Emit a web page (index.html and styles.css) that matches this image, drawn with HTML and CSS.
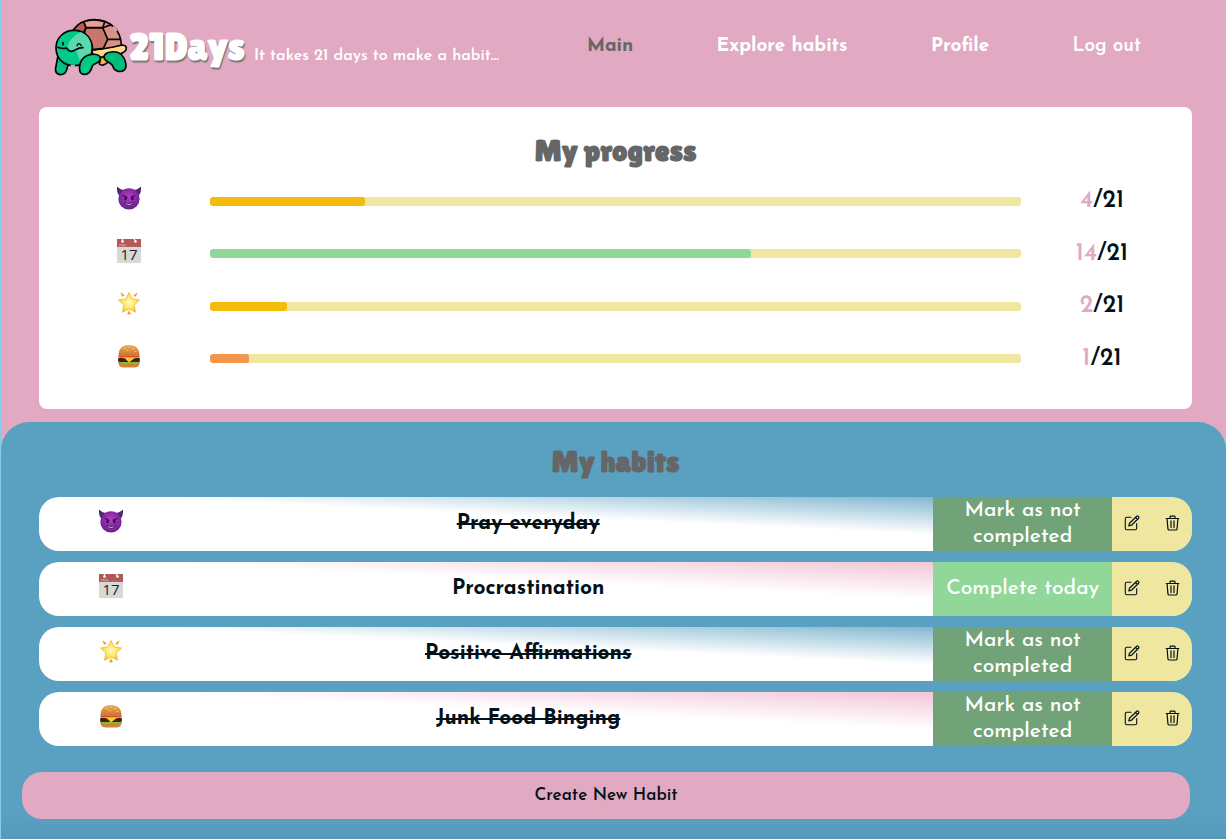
FILE: index.html
```html
<!DOCTYPE html>
<html lang="en">
<head>
<meta charset="utf-8">
<meta name="viewport" content="width=device-width, initial-scale=1">
<title>21Days</title>
<link rel="stylesheet" href="styles.css">
</head>
<body>
<svg class="sprite" aria-hidden="true">
  <defs>
    <radialGradient id="g-devil" cx=".5" cy=".4" r=".6"><stop offset="0" stop-color="#b040c4"/><stop offset=".6" stop-color="#8c28a8"/><stop offset="1" stop-color="#5e2488"/></radialGradient>
    <radialGradient id="g-star" cx=".5" cy=".5" r=".55"><stop offset="0" stop-color="#fffbc0"/><stop offset=".6" stop-color="#ffe45e"/><stop offset="1" stop-color="#f6b535"/></radialGradient>
    <linearGradient id="g-bun" x1="0" y1="0" x2="0" y2="1"><stop offset="0" stop-color="#f0ac55"/><stop offset="1" stop-color="#c9752a"/></linearGradient>
  </defs>
  <symbol id="devil" viewBox="0 0 24 24">
    <path d="M0 .5C-.3 5 .5 8 3 10.500L8 4C5 4 2.500 3 0 .5ZM24 .5C24.300 5 23.500 8 21 10.500L16 4C19 4 21.500 3 24 .5Z" fill="#55246f"/>
    <circle cx="12" cy="12.900" r="10.600" fill="url(#g-devil)"/>
    <path d="M6 9.500 10 11.300M18 9.500 14 11.300" stroke="#3b1055" stroke-width="1.200" stroke-linecap="round"/>
    <ellipse cx="8.600" cy="12.600" rx="1.200" ry="1.900" fill="#2c0b42"/><ellipse cx="15.400" cy="12.600" rx="1.200" ry="1.900" fill="#2c0b42"/>
    <path d="M7 16.500Q12 22 17 16.500Q12 18.700 7 16.500Z" fill="#f4e6fa" stroke="#3b1055" stroke-width=".8"/>
  </symbol>
  <symbol id="star" viewBox="0 0 24 24">
    <path d="M12 1.500 15.200 7.900 22.500 9 17.200 14.100 18.500 21.200 12 17.900 5.500 21.200 6.800 14.100 1.500 9 8.800 7.900Z" fill="url(#g-star)" stroke="#efb43b" stroke-width=".8" stroke-linejoin="round"/>
    <path d="M3.500 1.200 7.600 4.200 6 6Q3.800 4.500 3.500 1.200ZM20.500 1.200 16.400 4.200 18 6Q20.200 4.500 20.500 1.200ZM12 19.200 14 23Q12 24 10 23Z" fill="#eda42e"/>
  </symbol>
  <symbol id="burger" viewBox="0 0 24 24">
    <path d="M1.500 17.500H22.500V19.500Q22 23.500 17 23.500H7Q2 23.500 1.500 19.500Z" fill="#d18534"/>
    <path d="M1 17Q3 16 6 17T12 17T18 17T23 17V18.500Q20 21 17 19.500T11 19.500T5 19.500T1 18.500Z" fill="#83bd3b"/>
    <rect x="1" y="13.500" width="22" height="4.500" rx="2" fill="#43200f"/>
    <path d="M2 13H22L17 14.500 12 18.500 8 14.500Z" fill="#ffc928"/>
    <path d="M1.500 11.300H22.500V13.300H1.500Z" fill="#d84b31"/>
    <path d="M1.500 11.700C1.500 4.500 5 1 12 1S22.500 4.500 22.500 11.700Z" fill="url(#g-bun)"/>
    <path d="M7 4.500h1M11.500 3h1M15.500 5h1M10 6.500h1M18 7.500h1" stroke="#f8d79b" stroke-width=".8" stroke-linecap="round"/>
  </symbol>
  <symbol id="edit" viewBox="0 0 16 16">
    <path d="M7 2.300H2.800Q1.300 2.300 1.300 3.800V13.200Q1.300 14.700 2.800 14.700H11.200Q12.700 14.700 12.700 13.200V8.500" fill="none" stroke="currentColor" stroke-width="1.100" stroke-linecap="round"/>
    <path d="M4.800 10.900 5.500 8.200 12.700 1.300Q13.500.6 14.400 1.400T14.600 3.300L7.500 10.200ZM11.500 2.500 13.400 4.400" fill="none" stroke="currentColor" stroke-width="1.200" stroke-linejoin="round"/>
  </symbol>
  <symbol id="trash" viewBox="0 0 16 16">
    <path d="M2.200 3.500H14.800M6 3.300V2Q6 1.200 6.800 1.200H10.200Q11 1.200 11 2V3.300M3.100 3.700 3.900 13.600Q4 15 5.400 15H11.600Q13 15 13.100 13.600L13.900 3.700M7 5.800V12.600M10 5.800V12.600" fill="none" stroke="currentColor" stroke-width="1.200" stroke-linecap="round" stroke-linejoin="round"/>
  </symbol>
</svg>

<div class="app">
  <header class="header">
    <a class="brand" href="#">
      <svg class="logo" viewBox="42 38 222 174" aria-hidden="true">
        <g stroke="#050505" stroke-width="5" stroke-linejoin="round" stroke-linecap="round">
          <path d="M158 134 248 119Q262 121 258 134Q250 146 222 149L190 160Q170 158 155 142Z" fill="#ffd989"/>
          <path d="M178 176Q188 186 206 168L202 152 182 156Z" fill="#f5b83d"/>
          <path d="M98 76C119 50 143 43 162 43C209 43 243 74 244 119Q205 130 158 134L140 90Z" fill="#db9085"/>
          <path d="M98 76Q119 50 132 50L138 67 128 87Z" fill="#b95e50"/>
          <path d="M138 67H188L203 102 190 129 158 133Q158 105 132 87Z" fill="#c9776b"/>
          <path d="M138 67 131 49Q160 38 194 49L188 67ZM188 67 214 58M203 102H241" fill="#e5a195"/>
          <path d="M55 145 47 188Q44 205 60 208Q76 209 80 193L85 176Z" fill="#00c282"/>
          <path d="M102 75C134 75 156 98 156 127C156 159 133 181 102 181C70 181 48 159 48 127C48 99 71 75 102 75Z" fill="#00c98a"/>
          <path d="M122 80Q84 100 83 126Q95 142 108 136L123 174Q154 160 154 127Q154 94 122 80Z" fill="#5bd9ad" stroke="none"/>
          <path d="M54 126Q67 132 79 128Q91 145 107 133Q120 126 129 127M69 112V119" fill="none"/>
          <path d="M111 121Q116 109 124 121" fill="none" stroke-width="4"/>
          <path d="M150 148C172 144 183 151 181 162C179 174 161 173 157 182C153 198 147 208 132 207C116 206 117 187 121 174C126 158 136 151 150 148Z" fill="#00c984"/>
          <path d="M212 140C195 142 186 154 196 164C204 173 216 171 219 184C222 197 241 203 253 194C263 184 256 160 245 149C236 140 224 138 212 140Z" fill="#00bd79"/>
        </g>
        <path d="M219 64 230 77M92 181H105" stroke="#e1a9c2" stroke-width="6"/>
      </svg>
      <span class="name">21Days</span>
      <span class="tagline">It takes 21 days to make a habit...</span>
    </a>
    <nav class="nav">
      <a class="current" href="#" aria-current="page">Main</a>
      <a href="#">Explore habits</a>
      <a href="#">Profile</a>
      <a class="logout" href="#">Log out</a>
    </nav>
  </header>

  <section class="progress-card">
    <h2 class="title">My progress</h2>
    <div class="progress-list">
      <div class="progress-row"><svg class="emoji"><use href="#devil"/></svg><div class="track"><div class="fill amber" style="width:19.05%"></div></div><p class="count"><span>4</span>/21</p></div>
      <div class="progress-row">
        <svg class="emoji" viewBox="0 0 24 24">
          <path d="M0 0H24V24H0Z" fill="#d8d8d8"/><path d="M0 0H24V8H0Z" fill="#b15955"/>
          <path d="M5.500 0V2M17 0 18.500 2" stroke="#fff" stroke-width="1.200"/>
          <circle cx="5.500" cy="2.500" r="1.300" fill="#fff"/><circle cx="18.500" cy="2.500" r="1.300" fill="#fff"/>
          <path d="M3 4.800V7H1.800M4.600 4.800V7H6.400V4.800M8 4.800V7H9.600" fill="none" stroke="#dba6a2" stroke-width=".8"/>
          <path d="M13 7H22" stroke="#c47e79" stroke-width=".8" stroke-dasharray="1 1"/>
          <text x="12" y="21" text-anchor="middle" class="calendar-day">17</text>
        </svg>
        <div class="track"><div class="fill green" style="width:66.67%"></div></div><p class="count"><span>14</span>/21</p>
      </div>
      <div class="progress-row"><svg class="emoji"><use href="#star"/></svg><div class="track"><div class="fill amber" style="width:9.52%"></div></div><p class="count"><span>2</span>/21</p></div>
      <div class="progress-row"><svg class="emoji"><use href="#burger"/></svg><div class="track"><div class="fill orange" style="width:4.76%"></div></div><p class="count"><span>1</span>/21</p></div>
    </div>
  </section>

  <main class="habits">
    <h2 class="title">My habits</h2>
    <ul class="habit-list">
      <li class="habit blue">
        <svg class="emoji"><use href="#devil"/></svg><s class="habit-name">Pray everyday</s>
        <button class="mark done">Mark as not completed</button>
        <div class="tools"><button aria-label="Edit"><svg><use href="#edit"/></svg></button><button aria-label="Delete"><svg><use href="#trash"/></svg></button></div>
      </li>
      <li class="habit pink">
        <svg class="emoji" viewBox="0 0 24 24">
          <path d="M0 0H24V24H0Z" fill="#d8d8d8"/><path d="M0 0H24V8H0Z" fill="#b15955"/>
          <path d="M5.500 0V2M17 0 18.500 2" stroke="#fff" stroke-width="1.200"/>
          <circle cx="5.500" cy="2.500" r="1.300" fill="#fff"/><circle cx="18.500" cy="2.500" r="1.300" fill="#fff"/>
          <path d="M3 4.800V7H1.800M4.600 4.800V7H6.400V4.800M8 4.800V7H9.600" fill="none" stroke="#dba6a2" stroke-width=".8"/>
          <path d="M13 7H22" stroke="#c47e79" stroke-width=".8" stroke-dasharray="1 1"/>
          <text x="12" y="21" text-anchor="middle" class="calendar-day">17</text>
        </svg>
        <span class="habit-name">Procrastination</span>
        <button class="mark">Complete today</button>
        <div class="tools"><button aria-label="Edit"><svg><use href="#edit"/></svg></button><button aria-label="Delete"><svg><use href="#trash"/></svg></button></div>
      </li>
      <li class="habit blue">
        <svg class="emoji"><use href="#star"/></svg><s class="habit-name">Positive Affirmations</s>
        <button class="mark done">Mark as not completed</button>
        <div class="tools"><button aria-label="Edit"><svg><use href="#edit"/></svg></button><button aria-label="Delete"><svg><use href="#trash"/></svg></button></div>
      </li>
      <li class="habit pink">
        <svg class="emoji"><use href="#burger"/></svg><s class="habit-name">Junk Food Binging</s>
        <button class="mark done">Mark as not completed</button>
        <div class="tools"><button aria-label="Edit"><svg><use href="#edit"/></svg></button><button aria-label="Delete"><svg><use href="#trash"/></svg></button></div>
      </li>
    </ul>
    <button class="create">Create New Habit</button>
  </main>
</div>
</body>
</html>
```
FILE: styles.css
```css
* { box-sizing: border-box; }
body {
  margin: 0;
  background: #87cbe8;
  color: #051118;
  font-family: "Josefin Sans", Lato, sans-serif;
}
button { border: 0; padding: 0; font: inherit; color: inherit; cursor: pointer; }
a { color: inherit; text-decoration: none; }
.sprite { position: absolute; width: 0; height: 0; }
.calendar-day { font: 500 15px "Open Sans", sans-serif; fill: #222; }

.app {
  display: flex;
  flex-direction: column;
  min-height: 100vh;
  margin-left: 1px;
  background: #e1a9c2;
}

.header {
  display: flex;
  align-items: center;
  gap: 88px;
  height: 107px;
  padding: 0 85px 14px 53px;
  color: #fff;
}
.brand { display: flex; align-items: center; white-space: nowrap; }
.logo { width: 74px; height: 58px; }
.name {
  margin-left: 1px;
  font-family: "Lilita One", "Josefin Sans", Lato, sans-serif;
  font-size: 38px;
  font-weight: 700;
  text-shadow: 1px 2px 1px #777;
}
.tagline { padding: 18px 0 0 9px; font-size: 16px; line-height: 20px; font-weight: 600; }
.nav {
  display: flex;
  flex: 1;
  justify-content: space-between;
  font-size: 19px;
  font-weight: 700;
  white-space: nowrap;
}
.nav .current { color: #666; }
.nav .logout { font-weight: 600; }

.title {
  margin: 0;
  color: #666;
  font-family: "Lilita One", "Josefin Sans", Lato, sans-serif;
  font-size: 30px;
  line-height: 36px;
  font-weight: 700;
  text-align: center;
}
.emoji { width: 24px; height: 24px; justify-self: center; }

.progress-card {
  margin: 0 34px 13px 38px;
  padding: 26px 9px 24px;
  border-radius: 8px;
  background: #fff;
}
.progress-list { display: grid; grid-auto-rows: 1fr; height: 210px; margin-top: 6px; }
.progress-row { display: grid; grid-template-columns: 1fr 5fr 1fr; align-items: center; }
.progress-row .emoji { margin-bottom: 6px; }
.track { height: 9px; overflow: hidden; border-radius: 3px; background: #efe6a0; }
.fill { height: 100%; border-radius: 3px; }
.amber { background: #f5bb0c; }
.green { background: #90d799; }
.orange { background: #f3954a; }
.count { margin: 0; font-size: 24px; line-height: 30px; font-weight: 600; text-align: center; }
.count span { color: #e1a9c2; }

.habits {
  flex: 1;
  padding: 22px 34px 20px 38px;
  border-radius: 28px 28px 0 0;
  background: linear-gradient(to top, #5699b9, #5aa0c1 24px);
}
.habit-list { display: grid; gap: 11px; margin: 17px 0 26px; padding: 0; list-style: none; }
.habit {
  display: grid;
  grid-template-columns: 12.5% 1fr 15.5% 80px;
  align-items: center;
  min-height: 54px;
  overflow: hidden;
  border-radius: 20px;
}
.blue { background: linear-gradient(to top right, #fff 54%, #5aa0c1); }
.pink { background: linear-gradient(to top right, #fff 54%, #efb3ca); }
.habit .emoji { margin-bottom: 6px; }
.habit-name { padding-right: 60px; font-size: 21px; line-height: 28px; font-weight: 700; text-align: center; }
.mark {
  align-self: stretch;
  background: #90d799;
  color: #fff;
  font-size: 21px;
  line-height: 26px;
  font-weight: 500;
}
.mark.done { background: #72a378; }
.tools {
  display: grid;
  grid-template-columns: 1fr 1fr;
  align-self: stretch;
  background: #efe6a0;
}
.tools button { padding-bottom: 2px; background: none; }
.tools svg { display: block; width: 16px; height: 16px; margin: 0 auto; }
.create {
  display: block;
  width: calc(100% + 15px);
  height: 47px;
  margin-left: -17px;
  border-radius: 20px;
  background: #e1a9c2;
  font-size: 17px;
  font-weight: 600;
}
```
